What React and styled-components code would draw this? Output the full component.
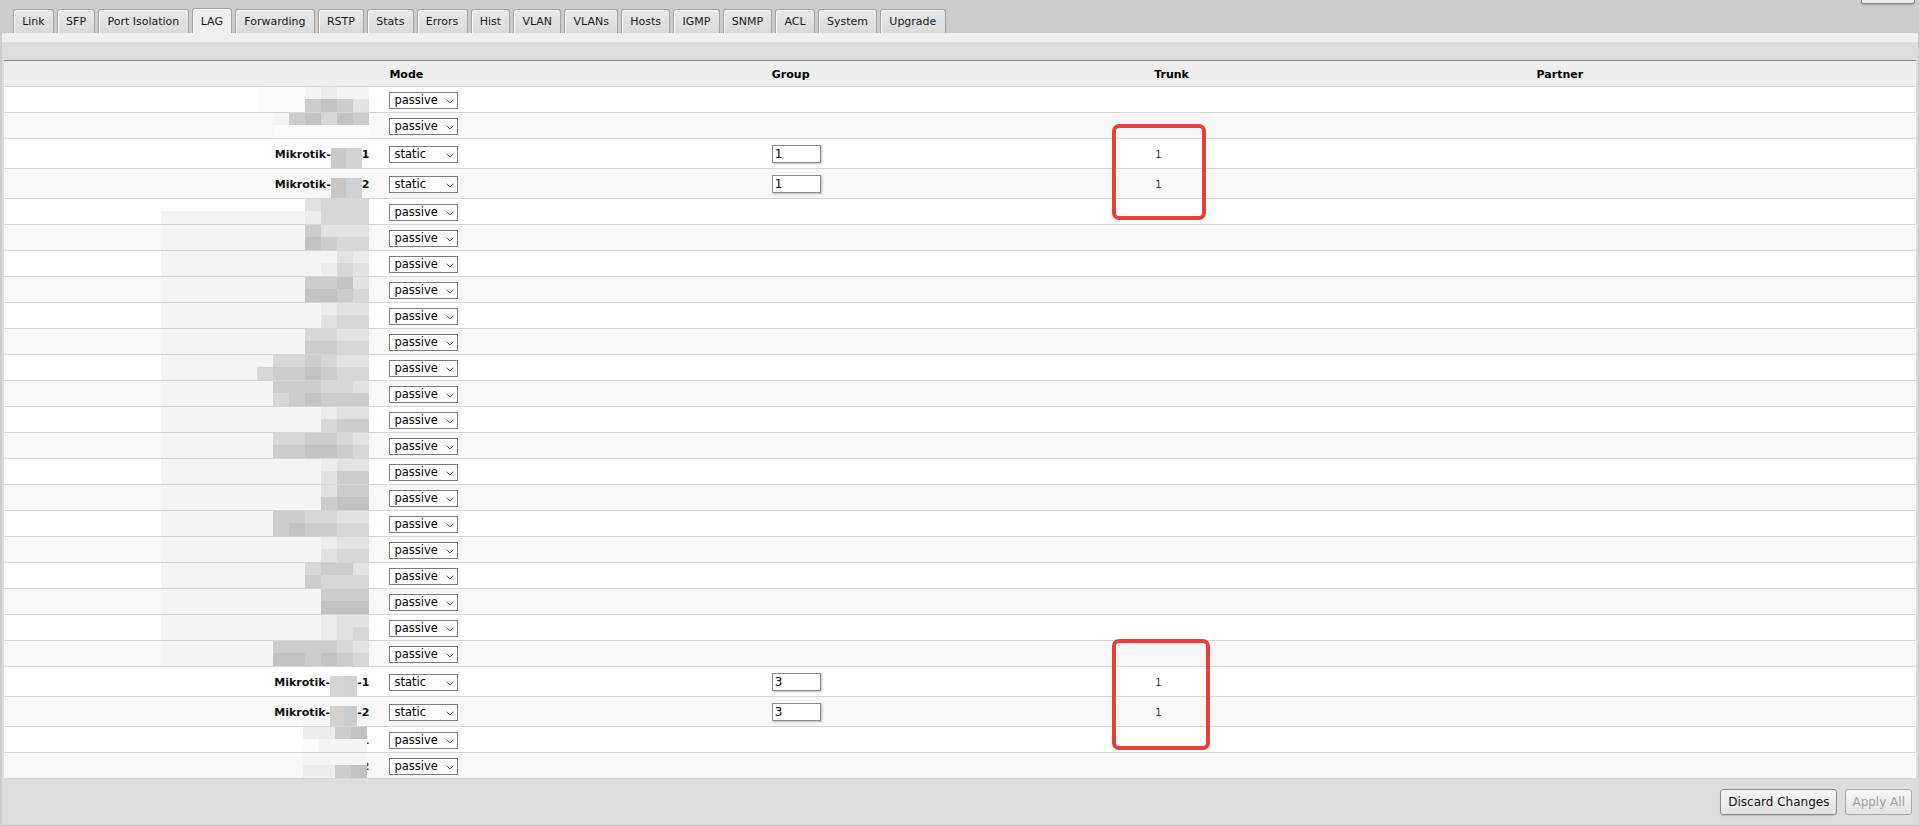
import React from 'react';
import styled, { createGlobalStyle } from 'styled-components';

const Global = createGlobalStyle`
  html, body { margin: 0; padding: 0; background: #cccccc; }
  body { font-family: "DejaVu Sans", Verdana, sans-serif; font-size: 11px; color: #000; }
  * { box-sizing: border-box; }
`;

const Page = styled.div`
  width: 1919px;
  height: 826px;
  display: flex;
  flex-direction: column;
  overflow: hidden;
  background: #cccccc;
`;

const TopBar = styled.div`
  height: 33px;
  flex: none;
  display: flex;
  align-items: flex-end;
  padding-left: 13px;
`;

const Tabs = styled.div`
  display: flex;
  align-items: flex-end;
  gap: 3px;
`;

const Tab = styled.div`
  height: ${(p) => (p.$active ? 25 : 24)}px;
  padding: 0 8.2px;
  display: flex;
  align-items: center;
  border: 1px solid #a2a2a2;
  border-bottom: none;
  border-radius: 3px 3px 0 0;
  background: ${(p) => (p.$active ? '#efefef' : 'linear-gradient(#e9e9e9, #dadada)')};
  box-shadow: inset 1px 1px 0 #fafafa;
  color: #1a1a1a;
  font-size: 11px;
  white-space: nowrap;
`;

const EdgeButton = styled.div`
  align-self: flex-start;
  margin-left: auto;
  margin-right: 4px;
  width: 54px;
  height: 4px;
  border: 1px solid #8a8a8a;
  border-top: none;
  border-radius: 0 0 3px 3px;
  background: #eeeeee;
  box-shadow: 0 1px 1px rgba(0, 0, 0, 0.2);
`;

const Panel = styled.div`
  flex: 1;
  margin: 0 1px 0 2px;
  background: #dddddd;
  display: flex;
  flex-direction: column;
`;

const Strip = styled.div`
  height: 9px;
  background: #efefef;
`;

const Band = styled.div`
  height: 18px;
`;

const TableArea = styled.div`
  position: relative;
  padding: 0 2px;
`;

const Grid = styled.div`
  border-top: 1px solid #888888;
`;

const Row = styled.div`
  display: grid;
  grid-template-columns: repeat(5, 1fr);
  height: ${(p) => (p.$tall ? 30 : 26)}px;
  border-bottom: 1px solid #d6d6d6;
  background: ${(p) => p.$bg};
`;

const HeadCell = styled.div`
  display: flex;
  align-items: center;
  padding: 1px 3px 0;
  font-weight: bold;
  font-size: 11px;
  color: #000;
`;

const Cell = styled.div`
  display: flex;
  align-items: center;
  padding: 1px 3px 0;
  min-width: 0;
`;

const NameCell = styled(Cell)`
  justify-content: flex-end;
  padding-right: 17px;
`;

const Name = styled.span`
  font-weight: bold;
  font-size: 11px;
  color: #111;
  white-space: nowrap;
`;

const Digit = styled.span`
  font-weight: bold;
  font-size: 11px;
  color: #2b4f8a;
  margin-left: -5px;
`;

const MosaicGrid = styled.span`
  display: grid;
  grid-template-rows: 12px 13px;
  grid-auto-flow: column;
  grid-auto-columns: 16px;
  position: relative;
  z-index: 1;
  margin-top: -1px;
`;

const Tile = styled.span`
  background: ${(p) => p.$c};
`;

const Redact = styled.span`
  display: flex;
  height: 20px;
  margin-top: 8px;
`;

const RedactTile = styled.span`
  width: ${(p) => p.$w}px;
  background: ${(p) => p.$c};
`;

const SelectWrap = styled.span`
  position: relative;
  display: inline-block;
  width: 69px;
  height: 17px;
`;

const Select = styled.select`
  appearance: none;
  -webkit-appearance: none;
  width: 100%;
  height: 100%;
  margin: 0;
  border: 1px solid #7c7c7c;
  border-radius: 0;
  background: #ffffff;
  padding: 0 0 0 4px;
  font-family: "DejaVu Sans", Verdana, sans-serif;
  font-size: 11.5px;
  color: #000;
  outline: none;
`;

const Chevron = styled.svg`
  position: absolute;
  right: 4px;
  top: 7px;
  pointer-events: none;
`;

const GroupInput = styled.input`
  width: 49px;
  height: 18px;
  border: 1px solid #8a8a8a;
  box-shadow: 1px 1px 2px rgba(0, 0, 0, 0.25);
  padding: 0 2px;
  font-family: "DejaVu Sans", Verdana, sans-serif;
  font-size: 12px;
  color: #000;
  background: #fff;
  outline: none;
`;

const TrunkValue = styled.span`
  font-size: 10px;
  color: #333;
  padding-left: 1px;
`;

const Annotation = styled.div`
  position: absolute;
  left: ${(p) => p.$x}px;
  top: ${(p) => p.$y}px;
  width: ${(p) => p.$w}px;
  height: ${(p) => p.$h}px;
  border: 4px solid #e5403a;
  border-radius: 7px;
  pointer-events: none;
`;

const Footer = styled.div`
  flex: 1;
  display: flex;
  justify-content: flex-end;
  align-items: center;
  gap: 8px;
  padding-right: 6px;
  border-bottom: 1px solid #bdbdbd;
`;

const Button = styled.button`
  height: 26px;
  padding: 0 ${(p) => (p.disabled ? 6 : 7)}px;
  border: 1px solid ${(p) => (p.disabled ? '#a8a8a8' : '#8c8c8c')};
  border-radius: 3px;
  background: linear-gradient(#f6f6f6, #e2e2e2);
  font-family: "DejaVu Sans", Verdana, sans-serif;
  font-size: 12px;
  color: ${(p) => (p.disabled ? '#a0a0a0' : '#111')};
  box-shadow: ${(p) => (p.disabled ? 'none' : '0 1px 1px rgba(0,0,0,0.15)')};
`;

const shades = {
  '.': 'transparent',
  '1': '#fbfbfb',
  '2': '#f4f4f4',
  '3': '#ececec',
  '4': '#e2e2e2',
  '5': '#d7d7d7',
  '6': '#cccccc',
  '7': '#c2c2c2',
};

function Mosaic({ top, bot }) {
  const cells = [];
  for (let i = 0; i < top.length; i++) {
    cells.push(<Tile key={'t' + i} $c={shades[top[i]]} />);
    cells.push(<Tile key={'b' + i} $c={shades[bot[i]]} />);
  }
  return <MosaicGrid>{cells}</MosaicGrid>;
}

const tabs = ['Link', 'SFP', 'Port Isolation', 'LAG', 'Forwarding', 'RSTP', 'Stats', 'Errors', 'Hist', 'VLAN', 'VLANs', 'Hosts', 'IGMP', 'SNMP', 'ACL', 'System', 'Upgrade'];

const blur = (top, bot) => ({ kind: 'blur', top, bot });
const mk = (suffix, group, tiles) => ({ kind: 'mk', suffix, group, tiles });

const rows = [
  blur('......1112322', '......1116764'),
  blur('.......267576', '.......111111'),
  mk('1', '1', [[15, '#ccc8c8'], [16, '#d0d2d6']]),
  mk('2', '1', [[15, '#cac6c6'], [16, '#cfd1d5']]),
  blur('.........4555', '2222222223555'),
  blur('2222222226444', '2222222227655'),
  blur('2222222222243', '2222222222354'),
  blur('2222222226674', '2222222227765'),
  blur('2222222222344', '2222222222455'),
  blur('2222222225544', '2222222226655'),
  blur('2222222556544', '2222225667655'),
  blur('2222222666554', '2222222567666'),
  blur('2222222222344', '2222222222566'),
  blur('2222222556654', '2222222667765'),
  blur('2222222222344', '2222222222466'),
  blur('2222222222466', '2222222222677'),
  blur('2222222665544', '2222222676655'),
  blur('2222222222344', '2222222222455'),
  blur('2222222225664', '2222222226555'),
  blur('2222222222666', '2222222222777'),
  blur('2222222222344', '2222222222345'),
  blur('2222222666654', '2222222776765'),
  mk('-1', '3', [[14, '#d8d6d4'], [13, '#cfd1d5']]),
  mk('-2', '3', [[14, '#d3d1cf'], [13, '#c9cbcf']]),
  { kind: 'tail', digit: '1', top: '.........3367', bot: '.........1222' },
  { kind: 'tail', digit: '2', top: '.........2222', bot: '.........3367' },
];

function ModeSelect({ value }) {
  return (
    <SelectWrap>
      <Select defaultValue={value}>
        <option value="passive">passive</option>
        <option value="active">active</option>
        <option value="static">static</option>
      </Select>
      <Chevron width="8" height="5" viewBox="0 0 8 5">
        <polyline points="0.5,0.5 4,4 7.5,0.5" fill="none" stroke="#5a5a5a" strokeWidth="1" />
      </Chevron>
    </SelectWrap>
  );
}

function NameContent({ row }) {
  if (row.kind === 'blur') return <Mosaic top={row.top} bot={row.bot} />;
  if (row.kind === 'tail')
    return (
      <>
        <Mosaic top={row.top} bot={row.bot} />
        <Digit>{row.digit}</Digit>
      </>
    );
  return (
    <>
      <Name>Mikrotik-</Name>
      <Redact>
        {row.tiles.map(([w, c], i) => (
          <RedactTile key={i} $w={w} $c={c} />
        ))}
      </Redact>
      <Name>{row.suffix}</Name>
    </>
  );
}

export default function App() {
  return (
    <Page>
      <Global />
      <TopBar>
        <Tabs>
          {tabs.map((t) => (
            <Tab key={t} $active={t === 'LAG'}>
              {t}
            </Tab>
          ))}
        </Tabs>
        <EdgeButton />
      </TopBar>
      <Panel>
        <Strip />
        <Band />
        <TableArea>
          <Grid>
            <Row $bg="#eeeeee">
              <HeadCell />
              <HeadCell>Mode</HeadCell>
              <HeadCell>Group</HeadCell>
              <HeadCell>Trunk</HeadCell>
              <HeadCell>Partner</HeadCell>
            </Row>
            {rows.map((row, i) => {
              const isStatic = row.kind === 'mk';
              return (
                <Row key={i} $tall={isStatic} $bg={i % 2 === 0 ? '#ffffff' : '#f7f7f7'}>
                  <NameCell>
                    <NameContent row={row} />
                  </NameCell>
                  <Cell>
                    <ModeSelect value={isStatic ? 'static' : 'passive'} />
                  </Cell>
                  <Cell>{isStatic && <GroupInput defaultValue={row.group} />}</Cell>
                  <Cell>{isStatic && <TrunkValue>1</TrunkValue>}</Cell>
                  <Cell />
                </Row>
              );
            })}
          </Grid>
          <Annotation $x={1110} $y={64} $w={94} $h={96} />
          <Annotation $x={1110} $y={579} $w={98} $h={111} />
        </TableArea>
        <Footer>
          <Button>Discard Changes</Button>
          <Button disabled>Apply All</Button>
        </Footer>
      </Panel>
    </Page>
  );
}
